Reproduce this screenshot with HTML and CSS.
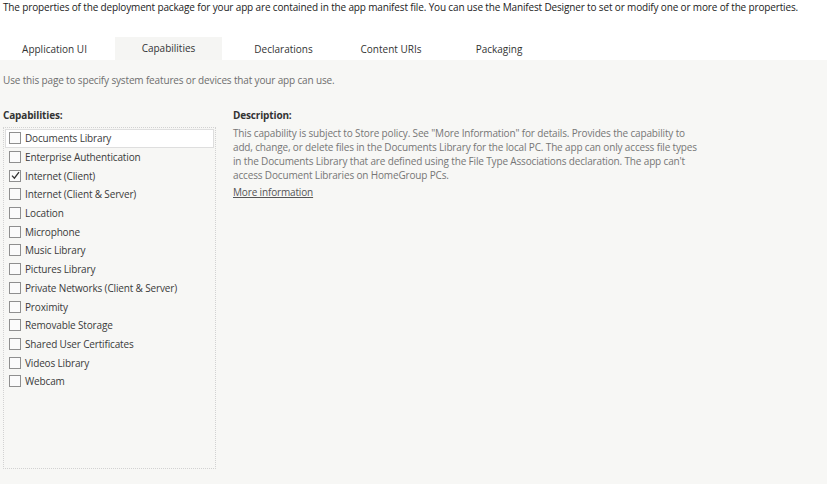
FILE: index.html
```html
<!DOCTYPE html>
<html>
<head>
<meta charset="utf-8">
<link rel="stylesheet" href="styles.css">
</head>
<body>
<p class="intro">The properties of the deployment package for your app are contained in the app manifest file. You can use the Manifest Designer to set or modify one or more of the properties.</p>
<div class="tabs">
  <div class="tab t1">Application UI</div>
  <div class="tab t2 active">Capabilities</div>
  <div class="tab t3">Declarations</div>
  <div class="tab t4">Content URIs</div>
  <div class="tab t5">Packaging</div>
</div>
<div class="panel">
  <p class="hint">Use this page to specify system features or devices that your app can use.</p>
  <div class="columns">
    <div class="caps">
      <div class="label">Capabilities:</div>
      <div class="list">
        <div class="item selected"><span class="box"></span>Documents Library</div>
        <div class="item"><span class="box"></span>Enterprise Authentication</div>
        <div class="item"><span class="box"><svg width="9" height="9" viewBox="0 0 9 9"><path d="M1 4.6 L3.4 7.2 L8 1.2" fill="none" stroke="#333" stroke-width="1.3"/></svg></span>Internet (Client)</div>
        <div class="item"><span class="box"></span>Internet (Client &amp; Server)</div>
        <div class="item"><span class="box"></span>Location</div>
        <div class="item"><span class="box"></span>Microphone</div>
        <div class="item"><span class="box"></span>Music Library</div>
        <div class="item"><span class="box"></span>Pictures Library</div>
        <div class="item"><span class="box"></span>Private Networks (Client &amp; Server)</div>
        <div class="item"><span class="box"></span>Proximity</div>
        <div class="item"><span class="box"></span>Removable Storage</div>
        <div class="item"><span class="box"></span>Shared User Certificates</div>
        <div class="item"><span class="box"></span>Videos Library</div>
        <div class="item"><span class="box"></span>Webcam</div>
      </div>
    </div>
    <div class="desc">
      <div class="label">Description:</div>
      <p class="text">This capability is subject to Store policy. See "More Information" for details. Provides the capability to<br>add, change, or delete files in the Documents Library for the local PC. The app can only access file types<br>in the Documents Library that are defined using the File Type Associations declaration. The app can't<br>access Document Libraries on HomeGroup PCs.</p>
      <a class="more">More information</a>
    </div>
  </div>
</div>
</body>
</html>
```
FILE: styles.css
```css
html, body {
  margin: 0;
  padding: 0;
  background: #ffffff;
  font-family: "Open Sans", "Noto Sans", sans-serif;
  font-size: 10px;
  letter-spacing: -0.15px;
  color: #333;
}
.intro {
  margin: 0;
  padding: 0 0 0 3px;
  height: 37px;
  line-height: 14px;
  white-space: nowrap;
  color: #222;
}
.tabs {
  display: flex;
  height: 23px;
}
.tab {
  line-height: 24px;
  text-align: center;
  color: #333;
  letter-spacing: 0;
}
.t1 { width: 109px; margin-right: 6px; }
.t2 { width: 107px; }
.t3 { width: 123px; }
.t4 { width: 92px; }
.t5 { width: 124px; }
.tab.active {
  background: #f5f5f3;
  line-height: 22px;
}
.panel {
  background: #f7f7f5;
  height: 424px;
  padding: 0 3px;
}
.hint {
  margin: 0;
  padding-top: 13px;
  line-height: 14px;
  height: 35px;
  color: #6e6e6e;
}
.columns {
  display: flex;
  gap: 17px;
}
.caps {
  width: 213px;
}
.label {
  font-weight: bold;
  color: #333;
  line-height: 14px;
}
.caps .label {
  margin-bottom: 5px;
}
.desc .label {
  margin-bottom: 4px;
}
.list {
  border: 1px dotted #d2d2d2;
  height: 338px;
  padding: 1px;
}
.item {
  display: flex;
  align-items: center;
  height: 18.7px;
  padding-left: 4px;
  color: #3a3a3a;
  white-space: nowrap;
}
.item.selected {
  background: #ffffff;
  border: 1px solid #dedede;
  height: 16.7px;
  padding-left: 3px;
}
.box {
  width: 10px;
  height: 10px;
  border: 1px solid #8f8f8f;
  background: #fbfbfb;
  margin-right: 4px;
  display: flex;
  align-items: center;
  justify-content: center;
  flex: none;
}
.desc {
  width: 560px;
}
.text {
  margin: 0;
  line-height: 14px;
  color: #767676;
  white-space: nowrap;
}
.more {
  display: inline-block;
  margin-top: 3px;
  line-height: 14px;
  color: #555;
  text-decoration: underline;
}
```
